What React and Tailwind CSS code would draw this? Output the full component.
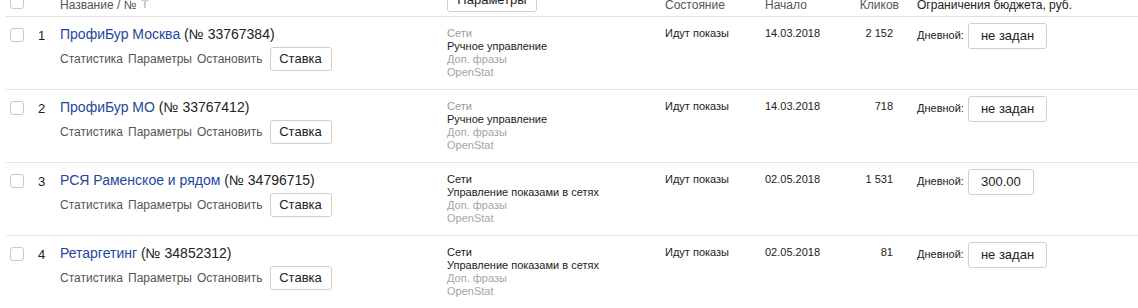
import React from 'react';

const campaigns = [
  { n: 1, name: "ПрофиБур Москва", id: "33767384", type: "Сети", typeDark: false, strategy: "Ручное управление", date: "14.03.2018", clicks: "2 152", budget: "не задан" },
  { n: 2, name: "ПрофиБур МО", id: "33767412", type: "Сети", typeDark: false, strategy: "Ручное управление", date: "14.03.2018", clicks: "718", budget: "не задан" },
  { n: 3, name: "РСЯ Раменское и рядом", id: "34796715", type: "Сети", typeDark: true, strategy: "Управление показами в сетях", date: "02.05.2018", clicks: "1 531", budget: "300.00" },
  { n: 4, name: "Ретаргетинг", id: "34852312", type: "Сети", typeDark: true, strategy: "Управление показами в сетях", date: "02.05.2018", clicks: "81", budget: "не задан" },
];

const Checkbox = () => (
  <div className="w-[14px] h-[14px] rounded-[3px] border border-[#c8c8c8] bg-white"></div>
);

const Row = ({ c }) => (
  <div className="flex h-[73px] border-b border-[#e6e6e6] ml-[6px] text-[11px] text-[#222]">
    <div className="w-[32px] pl-[4px] pt-[11px] shrink-0">
      <Checkbox />
    </div>
    <div className="w-[22px] pt-[9px] text-[13px] text-[#222] shrink-0">{c.n}</div>
    <div className="w-[386px] pt-[9px] shrink-0">
      <div className="text-[14px] leading-[17px]">
        <span className="text-[#24479c]">{c.name}</span>{" "}
        <span className="text-[#222]">(№ {c.id})</span>
      </div>
      <div className="flex items-center mt-[4px] text-[12px] text-[#555]">
        <span>Статистика</span>
        <span className="ml-[5px]">Параметры</span>
        <span className="ml-[5px]">Остановить</span>
        <button className="ml-[7px] h-[24px] w-[62px] border border-[#cfcfcf] rounded-[3px] bg-white text-[13px] text-[#222]">Ставка</button>
      </div>
    </div>
    <div className="w-[219px] pt-[10px] pl-[1px] leading-[13px] shrink-0">
      <div className={c.typeDark ? "text-[#222]" : "text-[#9a9a9a]"}>{c.type}</div>
      <div>{c.strategy}</div>
      <div className="text-[#a5a5a5]">Доп. фразы</div>
      <div className="text-[#a5a5a5]">OpenStat</div>
    </div>
    <div className="w-[100px] pt-[10px] leading-[13px] shrink-0">Идут показы</div>
    <div className="w-[80px] pt-[10px] leading-[13px] shrink-0">{c.date}</div>
    <div className="w-[48px] pt-[10px] leading-[13px] text-right shrink-0">{c.clicks}</div>
    <div className="pl-[24px] pt-[3px] flex items-center h-[34px] shrink-0">
      <span className="text-[#222]">Дневной:</span>
      <div className="ml-[4px] h-[26px] px-[12px] min-w-[66px] border border-[#cfcfcf] rounded-[3px] bg-white flex items-center justify-center text-[13px]">
        {c.budget}
      </div>
    </div>
  </div>
);

export default function App() {
  return (
    <div className="w-[1138px] h-[308px] bg-white overflow-hidden" style={{ fontFamily: '"Liberation Sans", Arial, sans-serif' }}>
      <div className="flex h-[17px] border-b border-[#e0e0e0] ml-[6px] text-[12px] text-[#555] overflow-hidden">
        <div className="w-[32px] pl-[4px] -mt-[5px] shrink-0">
          <Checkbox />
        </div>
        <div className="w-[22px] shrink-0"></div>
        <div className="w-[386px] -mt-[4px] shrink-0 flex items-start">
          <span>Название / №</span>
          <svg width="8" height="12" viewBox="0 0 8 12" className="ml-[4px] mt-[1px]">
            <path d="M4 11V1M1 4l3-3 3 3" fill="none" stroke="#9db0cc" strokeWidth="1.2" />
          </svg>
        </div>
        <div className="w-[219px] pl-[1px] shrink-0">
          <div className="-mt-[12px] h-[24px] w-[90px] border border-[#cfcfcf] rounded-[3px] bg-white flex items-center justify-center text-[13px] text-[#222]">
            Параметры
          </div>
        </div>
        <div className="w-[100px] -mt-[4px] shrink-0">Состояние</div>
        <div className="w-[80px] -mt-[4px] shrink-0">Начало</div>
        <div className="w-[54px] -mt-[4px] text-right shrink-0">Кликов</div>
        <div className="pl-[18px] -mt-[4px] shrink-0 text-[#222]">Ограничения бюджета, руб.</div>
      </div>
      {campaigns.map((c) => (
        <Row key={c.n} c={c} />
      ))}
    </div>
  );
}
